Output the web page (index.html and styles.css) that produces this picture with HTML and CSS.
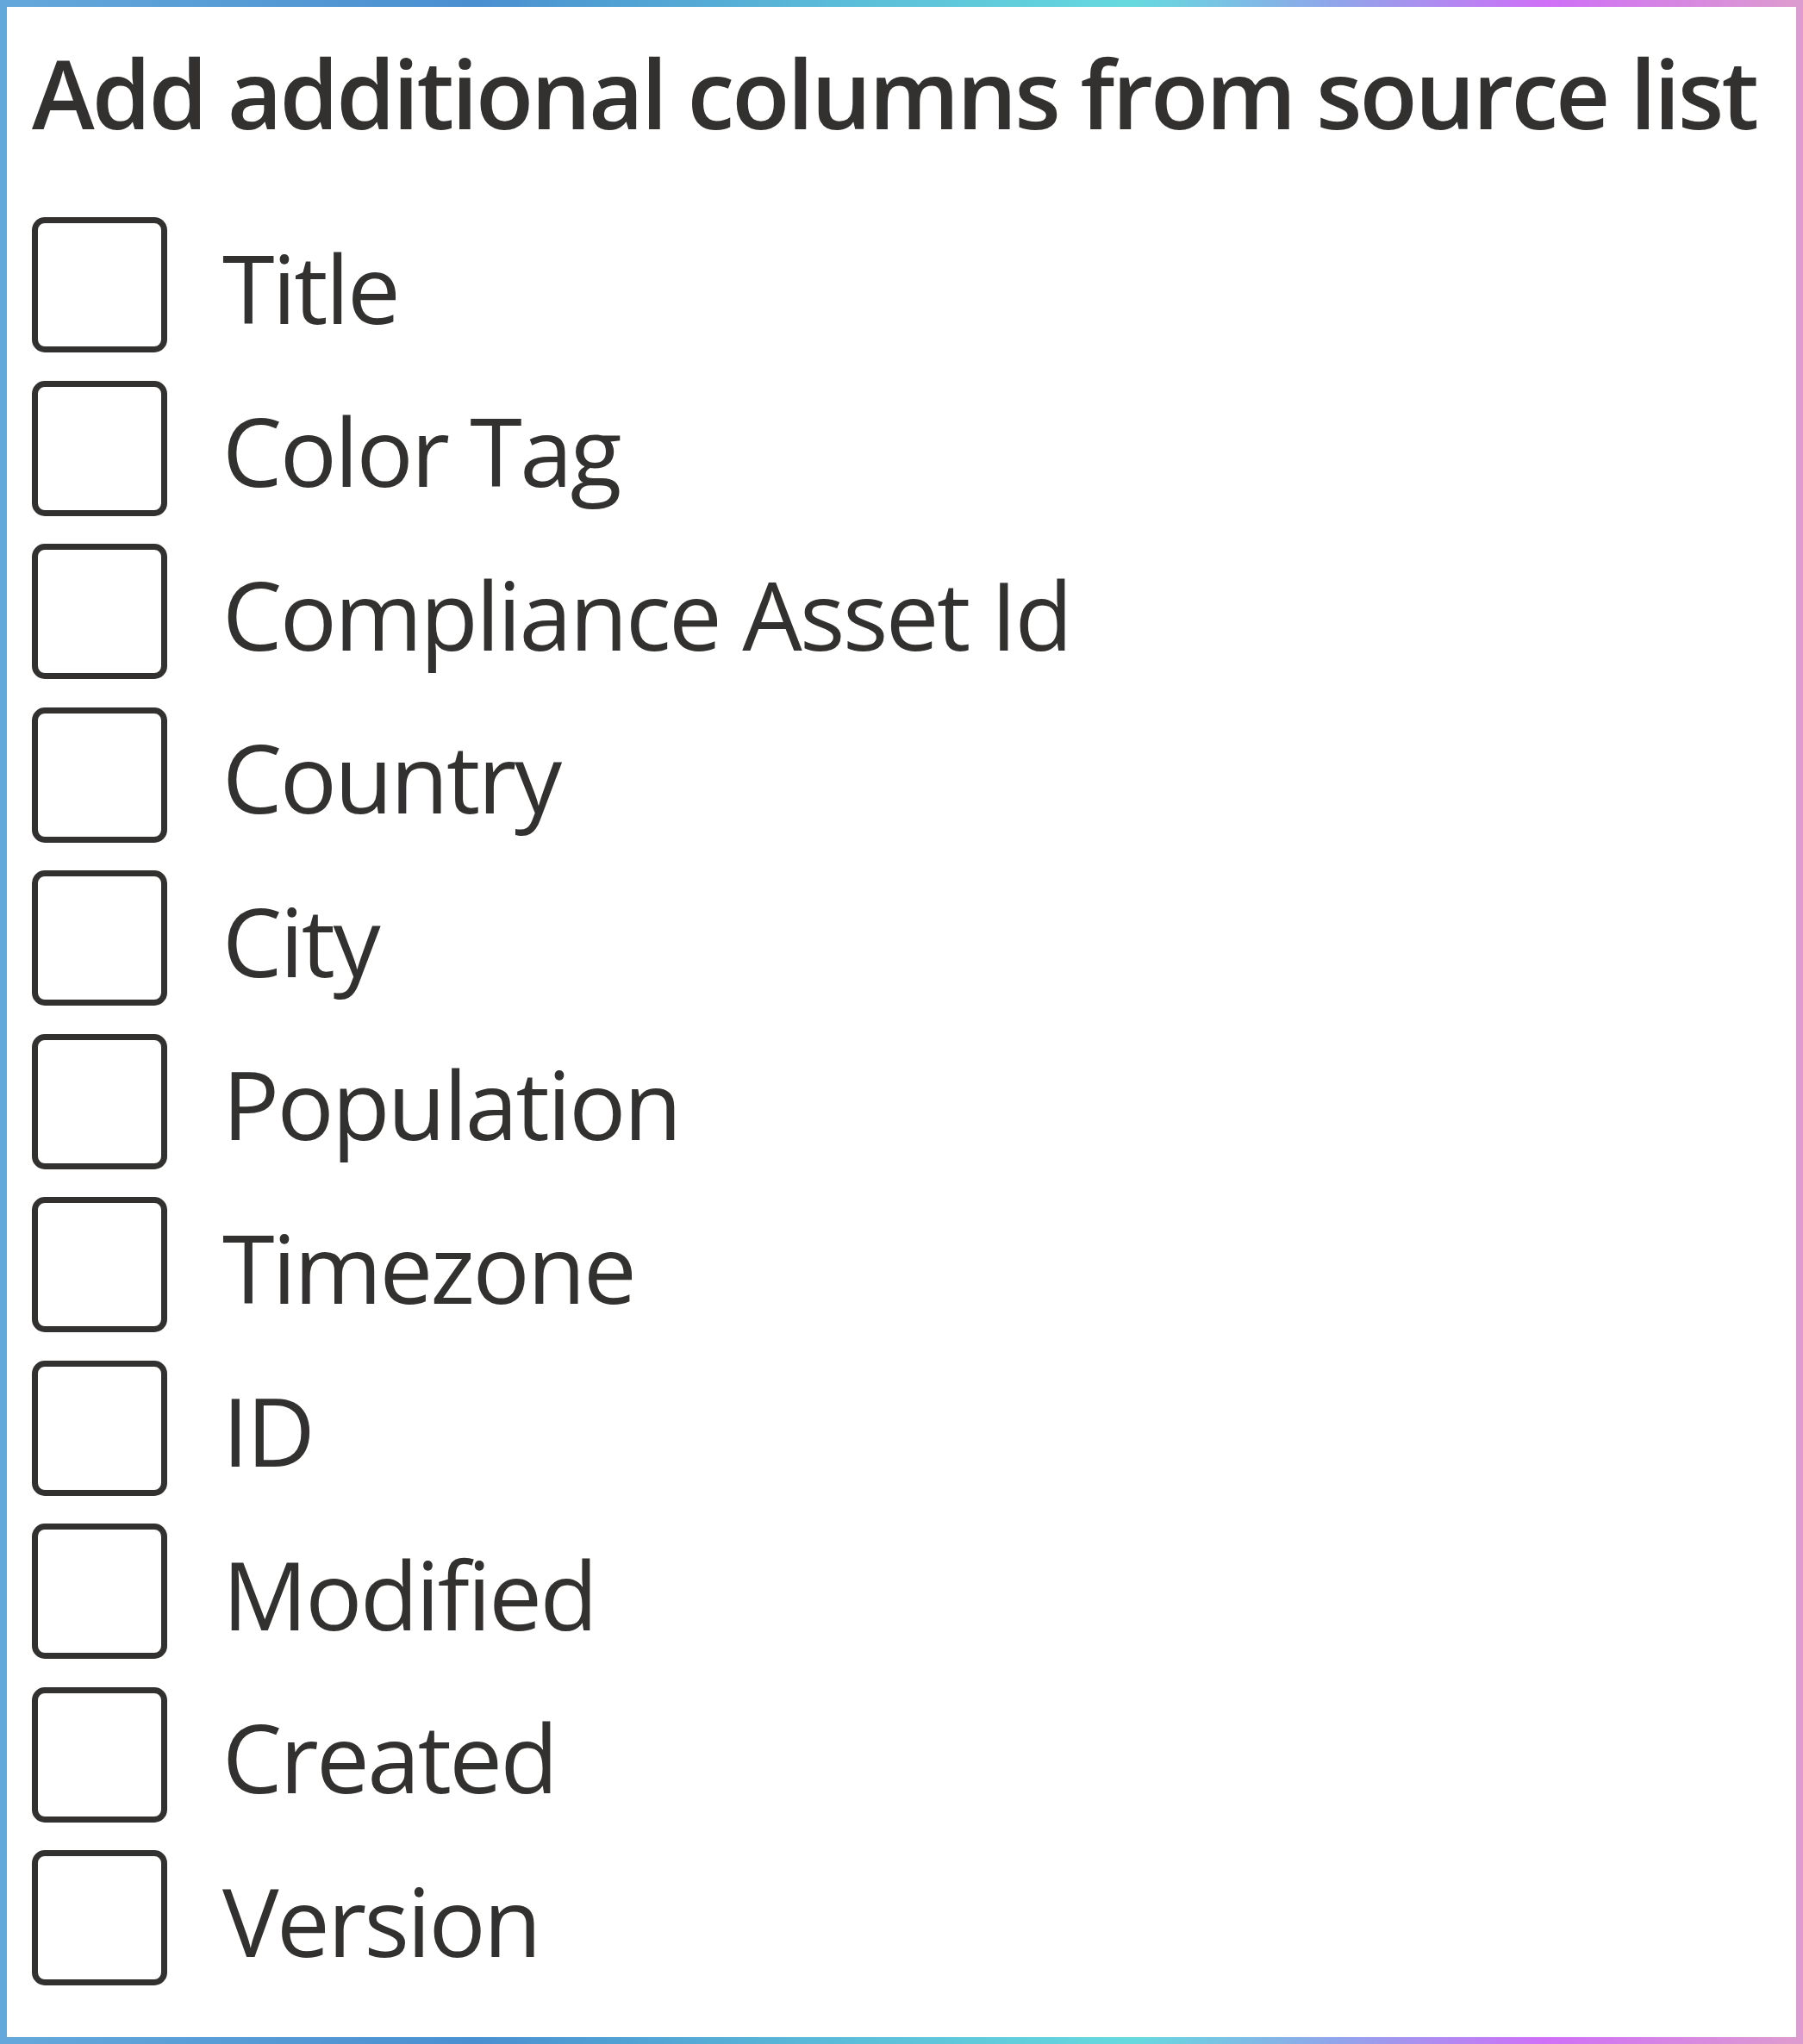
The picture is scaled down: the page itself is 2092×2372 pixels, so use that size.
FILE: index.html
```html
<!DOCTYPE html>
<html lang="en">
<head>
<meta charset="utf-8">
<title>Add additional columns from source list</title>
<link rel="stylesheet" href="styles.css">
</head>
<body>
<div class="panel">
  <h1 class="heading">Add additional columns from source list</h1>
  <div class="options">
    <label class="option"><span class="box"></span><span class="label">Title</span></label>
    <label class="option"><span class="box"></span><span class="label">Color Tag</span></label>
    <label class="option"><span class="box"></span><span class="label">Compliance Asset Id</span></label>
    <label class="option"><span class="box"></span><span class="label">Country</span></label>
    <label class="option"><span class="box"></span><span class="label">City</span></label>
    <label class="option"><span class="box"></span><span class="label">Population</span></label>
    <label class="option"><span class="box"></span><span class="label">Timezone</span></label>
    <label class="option"><span class="box"></span><span class="label">ID</span></label>
    <label class="option"><span class="box"></span><span class="label">Modified</span></label>
    <label class="option"><span class="box"></span><span class="label">Created</span></label>
    <label class="option"><span class="box"></span><span class="label">Version</span></label>
  </div>
</div>
</body>
</html>
```
FILE: styles.css
```css
* { box-sizing: border-box; }
html, body { margin: 0; padding: 0; background: #ffffff; }
body {
  font-family: "Open Sans", "Noto Sans", "Liberation Sans", sans-serif;
  color: #323130;
}
.panel {
  width: 2092px;
  height: 2372px;
  border: 8px solid transparent;
  border-image: linear-gradient(to right, #64a8db 0%, #4a8fd0 26%, #5cbfd9 48%, #66d9de 63%, #8fa6ea 74%, #cf6ff7 86%, #dd9ccf 100%) 1;
  padding: 44px 29px 0 29px;
  background: #ffffff;
}
.heading {
  margin: 0 0 90px 0;
  font-size: 110px;
  line-height: 110px;
  font-weight: 600;
  letter-spacing: -2.9px;
  white-space: nowrap;
}
.options {
  display: flex;
  flex-direction: column;
  gap: 32.5px;
}
.option {
  display: flex;
  align-items: center;
  height: 157px;
  gap: 64px;
}
.box {
  flex: none;
  width: 157px;
  height: 157px;
  border: 7px solid #323130;
  border-radius: 15px;
  background: #ffffff;
}
.label {
  font-size: 110px;
  line-height: 110px;
  font-weight: 400;
  letter-spacing: -2.6px;
  white-space: nowrap;
  padding-top: 4px;
}
```
